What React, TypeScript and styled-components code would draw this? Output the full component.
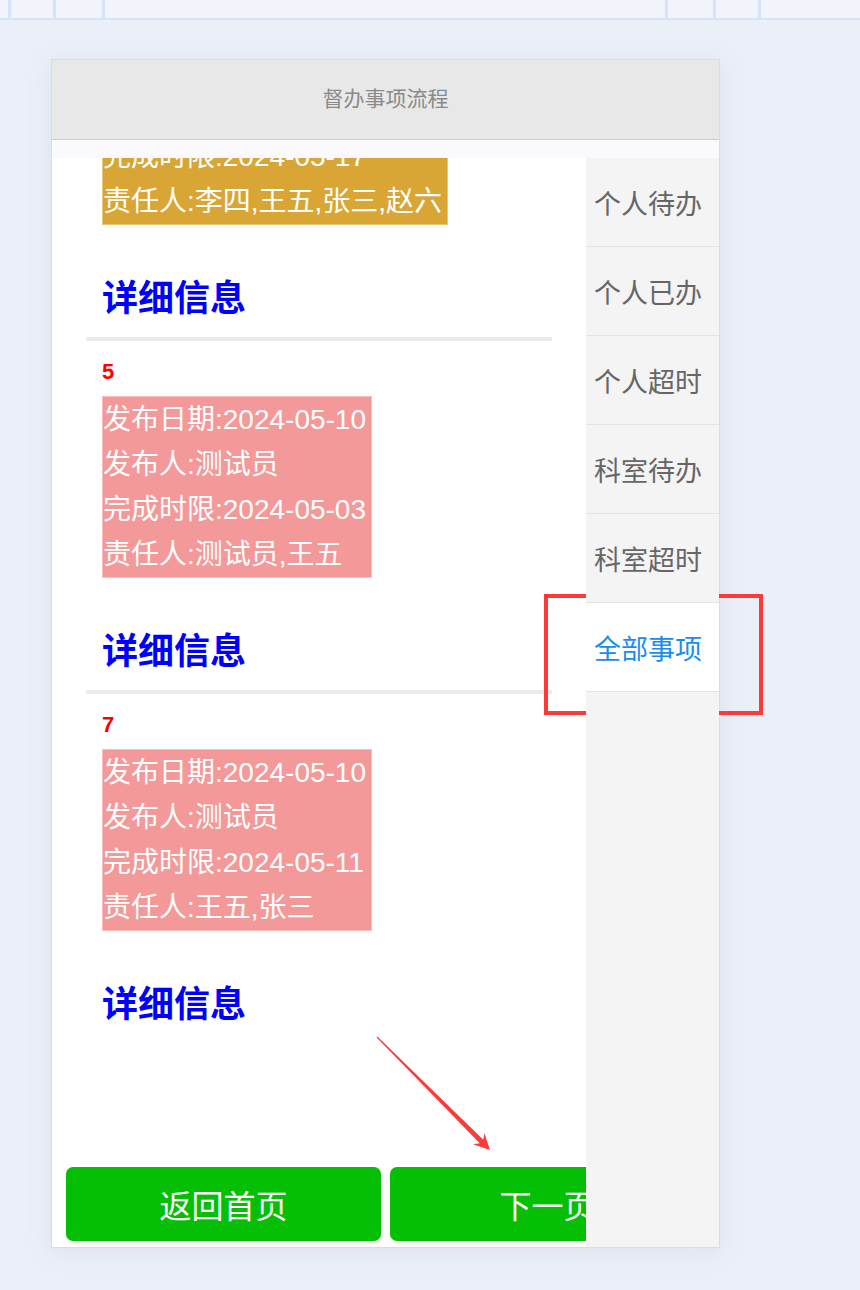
import React, { useLayoutEffect, useRef } from "react";
import styled, { createGlobalStyle } from "styled-components";

const GlobalStyle = createGlobalStyle`
  html, body {
    margin: 0;
    padding: 0;
    background: #ebeff8;
    font-family: "Liberation Sans", "Noto Sans CJK SC", sans-serif;
  }
  #root {
    min-height: 1290px;
    position: relative;
  }
`;

const TopBar = styled.div`
  height: 18px;
  background: #f1f4fa;
  border-bottom: 2px solid #d5e2f8;
  display: grid;
  grid-template-columns: 8px 3px 42px 3px 46px 3px 1fr 3px 45px 3px 42px 3px 99px;
`;

const Tick = styled.span`
  background: #d6e4fb;
`;

const Gap = styled.span``;

const Phone = styled.div`
  box-sizing: border-box;
  width: 669px;
  margin: 39px 0 0 51px;
  border: 1px solid #dcdcdc;
  background: #fff;
  box-shadow: 0 4px 24px rgba(120, 140, 180, 0.12);
  display: flex;
  flex-direction: column;
  overflow: hidden;
`;

const Header = styled.div`
  box-sizing: border-box;
  height: 80px;
  padding-bottom: 5px;
  background: #e8e8e8;
  border-bottom: 1px solid #cccccc;
  display: flex;
  align-items: center;
  justify-content: center;
  color: #8a8a8a;
  font-size: 21px;
`;

const Strip = styled.div`
  height: 18px;
  background: #faf9fe;
`;

const Body = styled.div`
  position: relative;
  height: 1089px;
  display: flex;
`;

const Main = styled.div`
  flex: 1;
  overflow-y: auto;
  scrollbar-width: none;
  padding-bottom: 220px;
  box-sizing: border-box;
  &::-webkit-scrollbar {
    display: none;
  }
`;

const Item = styled.div`
  padding: 15px 0 0 50px;
`;

const ItemNo = styled.div`
  height: 30px;
  line-height: 31px;
  font-size: 22px;
  font-weight: bold;
  color: #ff0000;
  margin-bottom: 10px;
`;

const InfoBox = styled.div<{ $tone: "gold" | "pink" }>`
  display: inline-block;
  border: 1px solid ${(p) => (p.$tone === "gold" ? "#e9c77a" : "#f9bdbd")};
  background: ${(p) => (p.$tone === "gold" ? "#d9a636" : "#f49999")};
  color: #fff;
  font-size: 28px;
  line-height: 45px;
  padding-right: 5px;
`;

const Line = styled.div`
  white-space: nowrap;
`;

const DetailLink = styled.div`
  margin-top: 48px;
  margin-bottom: 14px;
  height: 50px;
  line-height: 52px;
  font-size: 36px;
  font-weight: bold;
  color: #0000ff;
`;

const Divider = styled.div`
  height: 4px;
  background: #ececec;
  margin-left: 34px;
  width: 466px;
`;

const Sidebar = styled.div`
  position: relative;
  z-index: 2;
  width: 133px;
  background: #f4f4f4;
`;

const SideItem = styled.div<{ $active?: boolean }>`
  height: 88px;
  border-bottom: 1px solid #e3e3e3;
  display: flex;
  align-items: center;
  padding-left: 8px;
  font-size: 27px;
  color: ${(p) => (p.$active ? "#1a8cf0" : "#666666")};
  background: ${(p) => (p.$active ? "#ffffff" : "transparent")};
`;

const Footer = styled.div`
  position: absolute;
  left: 14px;
  right: 14px;
  bottom: 6px;
  z-index: 1;
  display: flex;
  gap: 9px;
`;

const GreenButton = styled.button`
  flex: 1;
  height: 74px;
  border: none;
  border-radius: 7px;
  background: #04bf04;
  color: #fff;
  font-family: inherit;
  font-size: 32px;
`;

const Overlay = styled.svg`
  position: absolute;
  left: 0;
  top: 0;
  pointer-events: none;
`;

type Task = {
  no: string;
  tone: "gold" | "pink";
  date: string;
  publisher: string;
  deadline: string;
  owners: string;
};

const tasks: Task[] = [
  { no: "3", tone: "gold", date: "2024-05-10", publisher: "测试员", deadline: "2024-05-17", owners: "李四,王五,张三,赵六" },
  { no: "5", tone: "pink", date: "2024-05-10", publisher: "测试员", deadline: "2024-05-03", owners: "测试员,王五" },
  { no: "7", tone: "pink", date: "2024-05-10", publisher: "测试员", deadline: "2024-05-11", owners: "王五,张三" },
];

const menu = ["个人待办", "个人已办", "个人超时", "科室待办", "科室超时", "全部事项"];

export default function App() {
  const listRef = useRef<HTMLDivElement>(null);

  useLayoutEffect(() => {
    if (listRef.current) listRef.current.scrollTop = 170;
  }, []);

  return (
    <>
      <GlobalStyle />
      <TopBar>
        <Gap /><Tick /><Gap /><Tick /><Gap /><Tick /><Gap /><Tick /><Gap /><Tick /><Gap /><Tick /><Gap />
      </TopBar>
      <Phone>
        <Header>督办事项流程</Header>
        <Strip />
        <Body>
          <Main ref={listRef}>
            {tasks.map((t, i) => (
              <React.Fragment key={t.no}>
                {i > 0 && <Divider />}
                <Item>
                  <ItemNo>{t.no}</ItemNo>
                  <InfoBox $tone={t.tone}>
                    <Line>发布日期:{t.date}</Line>
                    <Line>发布人:{t.publisher}</Line>
                    <Line>完成时限:{t.deadline}</Line>
                    <Line>责任人:{t.owners}</Line>
                  </InfoBox>
                  <DetailLink>详细信息</DetailLink>
                </Item>
              </React.Fragment>
            ))}
          </Main>
          <Sidebar>
            {menu.map((m) => (
              <SideItem key={m} $active={m === "全部事项"}>{m}</SideItem>
            ))}
          </Sidebar>
          <Footer>
            <GreenButton>返回首页</GreenButton>
            <GreenButton>下一页</GreenButton>
          </Footer>
        </Body>
      </Phone>
      <Overlay width="860" height="1290" viewBox="0 0 860 1290">
        <rect x="546" y="596" width="215" height="117" fill="none" stroke="#fd3a3a" strokeWidth="4" />
        <polygon
          points="377.4,1036.6 483.3,1139.7 484.3,1133 490,1150 473,1144.3 479.7,1143.3 376.6,1037.4"
          fill="#fd3a3a"
        />
      </Overlay>
    </>
  );
}
